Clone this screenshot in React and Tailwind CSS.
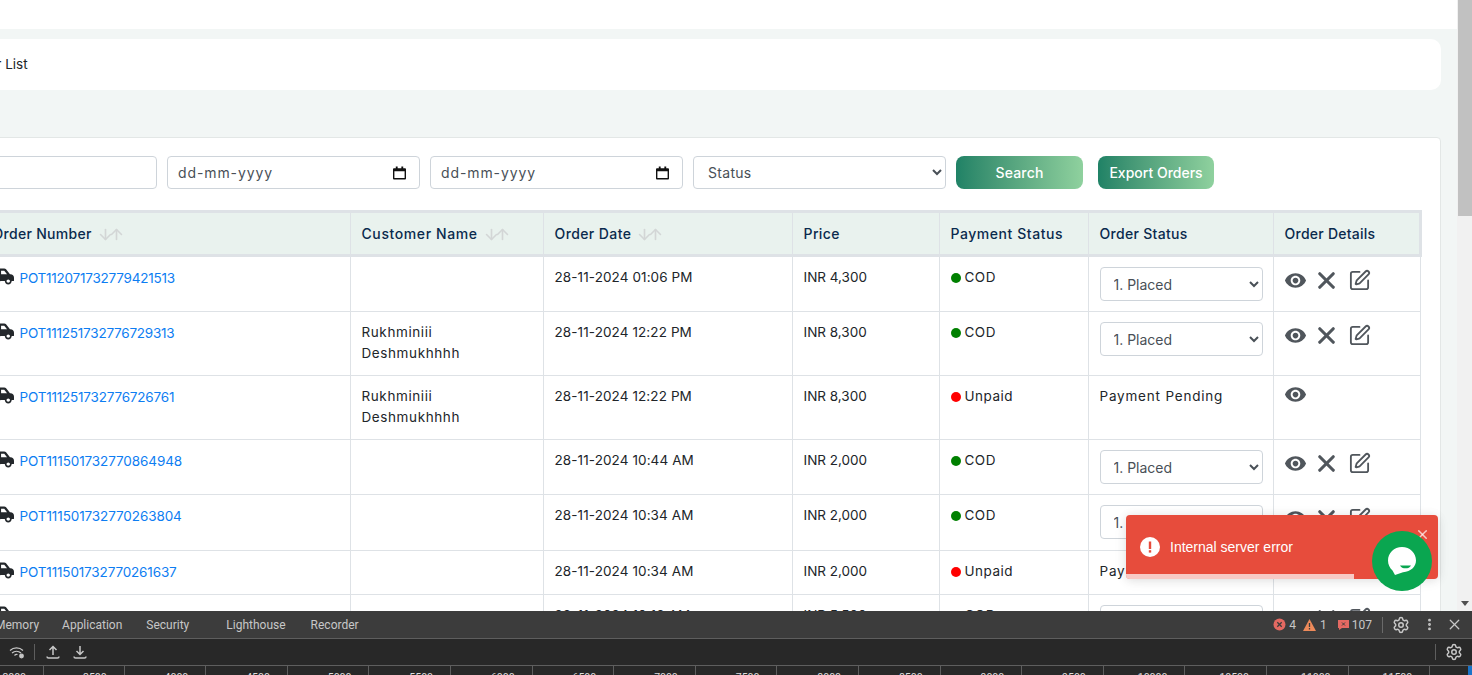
import React from "react";
import { FaCarSide } from "react-icons/fa";
import { MdRemoveRedEye } from "react-icons/md";
import { SquarePen, ArrowDown, ArrowUp, X, Settings, MoreVertical } from "lucide-react";

const rows = [
  { h: "h-[56px]", t: "tracking-[-0.23px]", id: "POT112071732779421513", name: null, date: "28-11-2024 01:06 PM", price: "INR 4,300", pay: "COD", status: "select" },
  { h: "h-[64px]", t: "tracking-[-0.23px]", id: "POT111251732776729313", name: ["Rukhminiii", "Deshmukhhhh"], date: "28-11-2024 12:22 PM", price: "INR 8,300", pay: "COD", status: "select" },
  { h: "h-[64px]", t: "tracking-[-0.2px]", id: "POT111251732776726761", name: ["Rukhminiii", "Deshmukhhhh"], date: "28-11-2024 12:22 PM", price: "INR 8,300", pay: "Unpaid", status: "pending" },
  { h: "h-[55px]", t: "tracking-[-0.1px]", id: "POT111501732770864948", name: null, date: "28-11-2024 10:44 AM", price: "INR 2,000", pay: "COD", status: "select" },
  { h: "h-[56px]", t: "tracking-[-0.1px]", id: "POT111501732770263804", name: null, date: "28-11-2024 10:34 AM", price: "INR 2,000", pay: "COD", status: "select" },
  { h: "h-[44px]", t: "tracking-[-0.15px]", id: "POT111501732770261637", name: null, date: "28-11-2024 10:34 AM", price: "INR 2,000", pay: "Unpaid", status: "pending" },
  { h: "h-[56px]", t: "tracking-[-0.15px]", id: "POT111501732769812345", name: null, date: "28-11-2024 10:18 AM", price: "INR 5,500", pay: "COD", status: "select" },
];

const rulers = ["3000","3500","4000","4500","5000","5500","6000","6500","7000","7500","8000","8500","9000","9500","10000","10500","11000","11500"];

function Sort() {
  return (
    <span className="inline-flex ml-[5px] text-[#d3d6d6] align-middle -mt-[2px]">
      <ArrowDown size={17} strokeWidth={2.3} className="-mr-[6px]" />
      <ArrowUp size={17} strokeWidth={2.3} />
    </span>
  );
}

function Th({ children, sort, t }) {
  return (
    <th className={"border-x border-[#dee2e6] px-[10.5px] text-left font-medium text-[14px] text-[#0a2a4d] whitespace-nowrap " + t}>
      {children}
      {sort && <Sort />}
    </th>
  );
}

function DateBox({ w }) {
  return (
    <div className={"h-[33px] border border-[#ced4da] rounded-[4px] bg-white flex items-center justify-between pl-[10px] pr-[13px] text-[14px] tracking-[0.9px] text-[#495057] " + w}>
      <span>dd-mm-yyyy</span>
      <svg width="13" height="14" viewBox="0 0 14 14">
        <path d="M3 0h2v2h4V0h2v2h2a1 1 0 0 1 1 1v10a1 1 0 0 1-1 1H1a1 1 0 0 1-1-1V3a1 1 0 0 1 1-1h2zM1.500 5v7.500h11V5z" fill="#111" />
      </svg>
    </div>
  );
}

function Row({ r }) {
  const cell = "border border-[#dee2e6] px-[10.5px] pt-[10px] align-top text-[13.5px] leading-[21px] text-[#212529]";
  const pending = r.status !== "select";
  return (
    <tr className={r.h}>
      <td className={cell}>
        <div className="flex items-center -ml-[1px] pt-[1px]">
          <FaCarSide size={23} className="text-[#23272b] shrink-0 -mt-[4px]" />
          <a className={"ml-[6px] text-[#0d7df2] " + r.t}>{r.id}</a>
        </div>
      </td>
      <td className={cell + " tracking-[0.6px]"}>
        {r.name && (
          <>
            {r.name[0]}
            <br />
            {r.name[1]}
          </>
        )}
      </td>
      <td className={cell + " tracking-[0.1px]"}>{r.date}</td>
      <td className={cell}>{r.price}</td>
      <td className={cell + " tracking-[0.5px]"}>
        <span className="inline-flex items-center gap-[4px]">
          <span className={"w-[10px] h-[10px] rounded-full " + (r.pay === "COD" ? "bg-[#008000]" : "bg-[#ff0000]")} />
          {r.pay}
        </span>
      </td>
      <td className={cell + " tracking-[0.8px]"}>
        {!pending ? (
          <select className="block w-[163px] h-[34px] border border-[#ced4da] rounded-[4px] bg-white pl-[9px] text-[14px] tracking-[0px] text-[#495057]">
            <option>1. Placed</option>
          </select>
        ) : (
          "Payment Pending"
        )}
      </td>
      <td className={cell}>
        <div className={"flex items-center text-[#50565c] h-[26px] " + (pending ? "-mt-[5px]" : "mt-0")}>
          <MdRemoveRedEye size={23} className="-ml-[1px] shrink-0" />
          {!pending && (
            <>
              <X size={27} strokeWidth={2.8} className="ml-[6px] shrink-0" />
              <SquarePen size={23} strokeWidth={1.9} className="ml-[8px] shrink-0" />
            </>
          )}
        </div>
      </td>
    </tr>
  );
}

export default function App() {
  return (
    <div className="w-[1472px] h-[675px] overflow-hidden flex flex-col relative font-['Inter','Liberation_Sans',sans-serif]">
      <div className="flex-1 min-h-0 flex">
        <div className="flex-1 min-w-0 bg-[#f2f6f5] overflow-hidden">
          <div className="h-[29px] bg-white" />
          <div className="mt-[10px] h-[51px] mr-[16px] -ml-[41px] bg-white rounded-[10px] flex items-center pl-[6px] text-[13.5px] text-[#212529] whitespace-nowrap">
            Order List
          </div>
          <div className="mt-[47px] mr-[16px] -ml-[41px] bg-white border border-[#e3e7e6] rounded-[4px] pl-[19px] pr-[19px] pt-[18px] h-[600px]">
            <div className="flex items-center h-[33px]">
              <div className="w-[178px] h-[33px] border border-[#ced4da] rounded-[4px] shrink-0" />
              <DateBox w="w-[253px] ml-[10px] shrink-0" />
              <DateBox w="w-[253px] ml-[10px] shrink-0" />
              <select className="w-[253px] h-[33px] ml-[10px] shrink-0 border border-[#ced4da] rounded-[4px] bg-white pl-[10px] text-[14px] tracking-[0.3px] text-[#495057]">
                <option>Status</option>
              </select>
              <button className="w-[127px] h-[33px] ml-[10px] shrink-0 rounded-[8px] text-white text-[14px] font-medium tracking-[0.2px] bg-linear-to-r from-[#1f8266] to-[#8fd19e]">Search</button>
              <button className="w-[116px] h-[33px] ml-[15px] shrink-0 rounded-[8px] text-white text-[14px] font-medium whitespace-nowrap bg-linear-to-r from-[#1f8266] to-[#8fd19e]">Export Orders</button>
            </div>
            <table className="mt-[21px] table-fixed border-collapse w-[1440px]">
              <colgroup>
                <col className="w-[370px]" />
                <col className="w-[193px]" />
                <col className="w-[249px]" />
                <col className="w-[147px]" />
                <col className="w-[149px]" />
                <col className="w-[185px]" />
                <col className="w-[147px]" />
              </colgroup>
              <thead>
                <tr className="h-[44px] bg-[#e9f2ee] border-y-[3px] border-x-[3px] border-[#dee2e6]">
                  <Th sort t="tracking-[0.3px]">Order Number</Th>
                  <Th sort t="tracking-[0.6px]">Customer Name</Th>
                  <Th sort t="tracking-[0.4px]">Order Date</Th>
                  <Th t="tracking-[0.4px]">Price</Th>
                  <Th t="tracking-[0.55px]">Payment Status</Th>
                  <Th t="tracking-[0.3px]">Order Status</Th>
                  <Th t="tracking-[0.25px]">Order Details</Th>
                </tr>
              </thead>
              <tbody>
                {rows.map((r) => (
                  <Row key={r.id} r={r} />
                ))}
              </tbody>
            </table>
          </div>
        </div>
        <div className="w-[15px] bg-[#f1f1f1] flex flex-col items-center relative shrink-0">
          <div className="absolute top-0 left-[1px] right-0 h-[216px] bg-[#c1c1c1]" />
          <div className="mt-auto mb-[5px] w-0 h-0 border-x-[4px] border-x-transparent border-t-[5px] border-t-[#505050]" />
        </div>
      </div>

      <div className="h-[64px] shrink-0 bg-[#282828] text-[#c7c7c7] font-['Roboto','Liberation_Sans',sans-serif]">
        <div className="h-[28px] bg-[#3c3c3c] border-b border-[#5e5e5e] flex items-center text-[12px] relative">
          <div className="flex items-center -ml-[5px]">
            <span>Memory</span>
            <span className="ml-[23px]">Application</span>
            <span className="ml-[24px]">Security</span>
            <span className="ml-[37px]">Lighthouse</span>
            <span className="ml-[25px]">Recorder</span>
          </div>
          <div className="ml-auto flex items-center h-full">
            <svg width="13" height="13" viewBox="0 0 13 13"><circle cx="6.500" cy="6.500" r="6" fill="#e46962" /><path d="M4.300 4.300l4.400 4.400M8.700 4.300l-4.400 4.400" stroke="#3c3c3c" strokeWidth="1.300" /></svg>
            <span className="ml-[3px]">4</span>
            <svg className="ml-[7px]" width="13" height="12" viewBox="0 0 13 12"><path d="M6.500 0L13 12H0z" fill="#ee8a5a" /><path d="M6.500 4v4M6.500 9v1.500" stroke="#3c3c3c" strokeWidth="1.300" /></svg>
            <span className="ml-[4px]">1</span>
            <svg className="ml-[11px]" width="11" height="11" viewBox="0 0 11 11"><path d="M0 1h11v8H4l-3 2V9H0z" fill="#e46962" /><path d="M4 3.500l3 3M7 3.500l-3 3" stroke="#3c3c3c" /></svg>
            <span className="ml-[3px]">107</span>
            <span className="ml-[10px] w-px h-[16px] bg-[#6a6a6a]" />
            <Settings size={18} className="ml-[9px]" />
            <MoreVertical size={15} strokeWidth={2.6} className="ml-[12px]" />
            <X size={17} strokeWidth={1.8} className="ml-[9px] mr-[9px]" />
          </div>
        </div>
        <div className="h-[27px] border-b border-[#5e5e5e] flex items-center">
          <svg className="ml-[9px]" width="16" height="13" viewBox="0 0 16 13" fill="none" stroke="#c7c7c7" strokeWidth="1.200"><path d="M1 4.500a9.500 9.500 0 0 1 13 0M3 7a7 7 0 0 1 9 0M5.500 9.500a3 3 0 0 1 3-1" /><circle cx="12.500" cy="10" r="1.800" fill="#c7c7c7" /></svg>
          <span className="ml-[9px] w-px h-[16px] bg-[#5e5e5e]" />
          <svg className="ml-[11px]" width="14" height="14" viewBox="0 0 14 14" fill="none" stroke="#c7c7c7" strokeWidth="1.500"><path d="M7 10V1.500M3.500 5L7 1.500 10.500 5M1 11.500c0 1 .5 1.500 1.500 1.500h9c1 0 1.500-.5 1.500-1.500" /></svg>
          <svg className="ml-[13px]" width="14" height="14" viewBox="0 0 14 14" fill="none" stroke="#c7c7c7" strokeWidth="1.500"><path d="M7 1v8.500M3.500 6L7 9.500 10.500 6M1 11.500c0 1 .5 1.500 1.500 1.500h9c1 0 1.500-.5 1.500-1.500" /></svg>
          <span className="ml-auto w-px h-[16px] bg-[#5e5e5e]" />
          <Settings size={18} className="ml-[9px] mr-[9px]" />
        </div>
        <div className="h-[9px] overflow-hidden flex text-[10.5px] text-[#dddddd] pl-[43px] relative">
          {rulers.map((t) => (
            <div key={t} className="w-[81.6px] shrink-0 border-r border-[#5e5e5e] pr-[17px] text-right leading-[12px] pt-[6px] first:absolute first:left-0 first:w-[44px]">
              {t}
            </div>
          ))}
          <div className="absolute right-0 top-0 w-[4px] h-[9px] bg-[#1a73c8]" />
        </div>
      </div>

      <div className="absolute left-[1126px] top-[515px] w-[312px] h-[64px] bg-[#e74c3c] rounded-[4px] shadow-[0_1px_10px_rgba(0,0,0,0.1),0_2px_15px_rgba(0,0,0,0.05)] text-white overflow-hidden flex items-center pl-[14px]">
        <svg width="20" height="20" viewBox="0 0 20 20"><circle cx="10" cy="10" r="10" fill="#fff" /><rect x="8.800" y="4.500" width="2.400" height="7.500" fill="#e74c3c" /><rect x="8.800" y="13.200" width="2.400" height="2.400" fill="#e74c3c" /></svg>
        <span className="ml-[10px] text-[14px] font-['Liberation_Sans',sans-serif]">Internal server error</span>
        <X size={15} strokeWidth={2.4} className="absolute right-[8px] top-[12px] text-white/70" />
        <div className="absolute left-0 bottom-0 w-[228px] h-[5px] bg-white/70" />
      </div>
      <div className="absolute left-[1372px] top-[531px] w-[60px] h-[60px] rounded-full bg-[#0aa650] flex items-center justify-center">
        <svg width="30" height="30" viewBox="0 0 30 30">
          <path d="M15 1C7 1 1 7 1 14.500c0 4 1.800 7.500 4.500 10L8 29l8-2.800C24 25.700 29 20.500 29 14.500 29 7 23 1 15 1z" fill="#fff" />
          <path d="M13 19.500h11c-1 2-3 2.800-5.500 2.800s-4.500-.8-5.500-2.800z" fill="#0aa650" />
        </svg>
      </div>
    </div>
  );
}
